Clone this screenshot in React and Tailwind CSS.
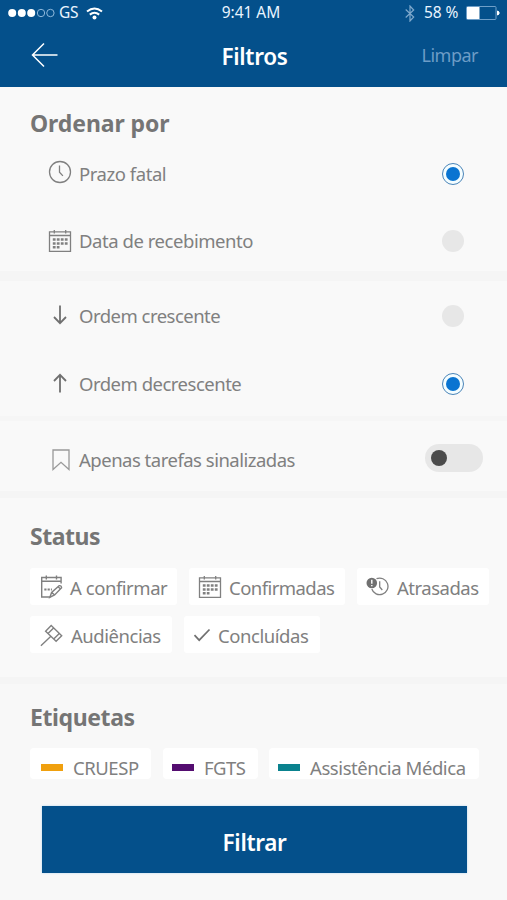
import React from "react";

function Clock() {
  return (
    <svg width="24" height="24" viewBox="0 0 24 24" fill="none" stroke="#808080" strokeWidth="1.3">
      <circle cx="12" cy="12" r="10.5" />
      <path d="M11.500 5.500v6.800l3.400 3.600" />
    </svg>
  );
}

function Calendar() {
  return (
    <svg width="24" height="24" viewBox="0 0 24 24" fill="none" stroke="#808080" strokeWidth="1.3">
      <path d="M1.500 2.800h21v19.600h-21zM1.500 6.500h21M6.300 1v3.600M17.700 1v3.600" />
      <path d="M4.800 10.500h14.800M4.800 14.400h14.800M4.800 18.300h6.700" strokeWidth="2.500" strokeDasharray="2.800 1.200" />
    </svg>
  );
}

function CalendarEdit() {
  return (
    <svg width="24" height="24" viewBox="0 0 24 24" fill="none" stroke="#808080" strokeWidth="1.4">
      <path d="M10.500 22H1.700V2.500h19.400v6M1.700 6.300h19.400M6.300 .6v3.800M16.500 .6v3.800" />
      <path d="M4.300 14.500h7.600" strokeWidth="2" strokeDasharray="2.200 1.100" />
      <path d="M9.800 22.400l1.800-5 7.600-6.700q2.200-.4 2.400 2l-7 7.300zM11.600 17.400l3 2.600M18 11.800l2.600 2.200" />
    </svg>
  );
}

function Late() {
  return (
    <svg width="24" height="20" viewBox="0 0 24 20" fill="none" stroke="#808080" strokeWidth="1.3">
      <path d="M10.500 1.700A8.300 8.300 0 1 1 5.800 12M13.700 4.200v5.800l2.600 3" />
      <circle cx="5.800" cy="6" r="5.300" fill="#707070" stroke="none" />
      <path d="M5.800 2.800v4M5.800 8v1.300" stroke="#fff" strokeWidth="1.400" />
    </svg>
  );
}

function Gavel() {
  return (
    <svg width="24" height="24" viewBox="0 0 24 24" fill="none" stroke="#808080" strokeWidth="1.4">
      <path d="M11.200 2.500L21.700 12.700L16.100 18.300L5.600 8.300zM13.600 4.900L8 10.600M19.300 10.400L13.700 16M10.900 13.300L.9 22.700" />
    </svg>
  );
}

function Check() {
  return (
    <svg width="18" height="14" viewBox="0 0 18 14" fill="none" stroke="#707070" strokeWidth="1.7">
      <path d="M1.500 7.200l4.700 5L16.500 1.500" />
    </svg>
  );
}

function ArrowV({ up }) {
  return (
    <svg className="-mt-[2px]" width="16" height="20" viewBox="0 0 16 20" fill="none" stroke="#707070" strokeWidth="1.8">
      <path d={up ? "M8 19.500V2M2 8l6-6.200L14 8" : "M8 .5V18M2 12l6 6.200 6-6.200"} />
    </svg>
  );
}

function Bookmark() {
  return (
    <svg width="18" height="22" viewBox="0 0 18 22" fill="none" stroke="#999" strokeWidth="1.300">
      <path d="M1 1h16v19.500l-8-7.200-8 7.200z" />
    </svg>
  );
}

function Radio({ on }) {
  return on ? (
    <span className="flex size-[22px] items-center justify-center rounded-full border border-[#4a84b8] bg-[#f4fdff]">
      <span className="size-[14px] rounded-full bg-[#0a74d1]" />
    </span>
  ) : (
    <span className="size-[22px] rounded-full bg-[#e7e7e7]" />
  );
}

function Row({ icon, label, track, on, h }) {
  return (
    <div className={`flex items-center pr-[43px] pl-12 ${h}`}>
      <span className="flex w-6 justify-center">{icon}</span>
      <span className={`ml-[7px] flex-1 text-[18.5px] ${track}`}>{label}</span>
      <Radio on={on} />
    </div>
  );
}

function Chip({ icon, label, size, iconBox, track }) {
  return (
    <div className={`flex h-[37px] items-center rounded-[3px] bg-white whitespace-nowrap ${size}`}>
      <span className={`flex shrink-0 ${iconBox}`}>{icon}</span>
      <span className={`mt-[2px] text-[18.5px] ${track}`}>{label}</span>
    </div>
  );
}

function Tag({ color, label, size, track }) {
  return (
    <div className={`flex h-[31px] items-center rounded-[4px] bg-white whitespace-nowrap ${size}`}>
      <span className={`mt-[8px] mr-[10px] h-[7px] w-[22px] shrink-0 ${color}`} />
      <span className={`mt-[9px] text-[18.5px] ${track}`}>{label}</span>
    </div>
  );
}

const heading = "pl-[30px] text-[23px] leading-8 font-bold text-[#757575]";

export default function App() {
  return (
    <div className="flex h-[900px] w-[507px] flex-col overflow-hidden bg-[#f9f9f9] font-['Noto_Sans','Open_Sans',sans-serif] text-[#808080]">
      <header className="h-[87px] shrink-0 bg-[#04508b] text-[#eaf5ff]">
        <div className="grid h-[26px] grid-cols-[1fr_66px_1fr] items-center text-[15.5px] whitespace-nowrap">
          <div className="flex items-center pl-2">
            <svg width="48" height="10" viewBox="0 0 48 10" fill="#fff">
              <circle cx="4.2" cy="5" r="4" />
              <circle cx="13.8" cy="5" r="4" />
              <circle cx="23.2" cy="5" r="4" />
              <g fill="none" stroke="#8fb9dc" strokeWidth="1">
                <circle cx="33" cy="5" r="3.7" />
                <circle cx="42.4" cy="5" r="3.7" />
              </g>
            </svg>
            <span className="ml-[3px] w-[27px] tracking-[-0.3px]">GS</span>
            <svg width="17" height="13" viewBox="0 0 17 13" fill="none" stroke="#fff" strokeWidth="2">
              <path d="M1 4.600Q8.500-1.600 16 4.600M3.800 7.600q4.700-3.800 9.400 0" />
              <circle cx="8.500" cy="10.600" r="2" fill="#fff" stroke="none" />
            </svg>
          </div>
          <div className="-ml-[5px] text-center tracking-[-0.05px]">9:41 AM</div>
          <div className="flex items-center justify-end pr-[7px]">
            <svg width="10" height="17" viewBox="0 0 10 17" fill="none" stroke="#7fa9cd" strokeWidth="1.200">
              <path d="M.7 4.500l8 7.500L5 16V1l3.700 4-8 7.500" />
            </svg>
            <span className="ml-[9px] w-[42px] tracking-[-0.1px]">58 %</span>
            <svg width="34" height="14" viewBox="0 0 34 14" fill="none">
              <rect x=".5" y=".5" width="29.500" height="13" rx="1" stroke="#6f9fc8" />
              <path d="M1 1h12.500v12H1z" fill="#fff" />
              <path d="M31.500 5v4l1.500-1V6z" fill="#fff" stroke="#fff" />
            </svg>
          </div>
        </div>
        <div className="grid h-[58px] grid-cols-[1fr_80px_1fr] items-center pr-[29px] pl-[31px]">
          <svg width="28" height="26" viewBox="0 0 28 26" fill="none" stroke="#fff" strokeWidth="1.500">
            <path d="M13 1.500L1.500 13 13 24.500M1.500 13H26.500" />
          </svg>
          <h1 className="mt-1 text-center text-[22.5px] font-semibold tracking-[-0.3px] text-white">Filtros</h1>
          <span className="text-right text-[18px] tracking-[-0.5px] text-[#6d9cc6]">Limpar</span>
        </div>
      </header>

      <section className="h-[194px] shrink-0 border-b-[10px] border-[#f5f5f5] pt-[20px]">
        <h2 className={`${heading} tracking-[-0.1px]`}>Ordenar por</h2>
        <Row h="h-[69px]" icon={<span className="-mt-[3px]"><Clock /></span>} label="Prazo fatal" track="tracking-[-0.45px]" on />
        <Row h="h-[65px]" icon={<Calendar />} label="Data de recebimento" track="tracking-[-0.45px]" />
      </section>

      <section className="h-[140px] shrink-0 border-b-[5px] border-[#f6f6f6] pt-[2px]">
        <Row h="h-[66px]" icon={<ArrowV />} label="Ordem crescente" track="tracking-[-0.52px]" />
        <Row h="h-[69px]" icon={<ArrowV up />} label="Ordem decrescente" track="tracking-[-0.5px]" on />
      </section>

      <section className="flex h-[77px] shrink-0 items-center border-b-[7px] border-[#f5f5f5] pr-6 pl-12">
        <span className="mt-[7px] flex w-6 justify-center pl-px"><Bookmark /></span>
        <span className="mt-[7px] ml-[7px] flex-1 text-[18.5px] tracking-[-0.5px]">Apenas tarefas sinalizadas</span>
        <span className="mt-1 flex h-7 w-[58px] items-center rounded-full bg-[#e7e7e7] pl-[6px]">
          <span className="size-4 rounded-full bg-[#4b4b4b]" />
        </span>
      </section>

      <section className="h-[186px] shrink-0 border-b-[7px] border-[#f5f5f5] pt-[22px]">
        <h2 className={`${heading} tracking-[-0.45px]`}>Status</h2>
        <div className="mt-[16px] flex gap-3 pl-[30px]">
          <Chip size="w-[147px]" iconBox="pl-[10px] w-[40px]" icon={<CalendarEdit />} label="A confirmar" track="tracking-[-0.45px]" />
          <Chip size="w-[156px]" iconBox="pl-[9px] w-[40px]" icon={<Calendar />} label="Confirmadas" track="tracking-[-0.55px]" />
          <Chip size="w-[132px]" iconBox="pl-[9px] w-[40px]" icon={<Late />} label="Atrasadas" track="tracking-[-0.5px]" />
        </div>
        <div className="mt-[11px] flex gap-3 pl-[30px]">
          <Chip size="w-[142px]" iconBox="pl-[10px] w-[41px]" icon={<Gavel />} label="Audiências" track="tracking-[-0.45px]" />
          <Chip size="w-[136px]" iconBox="pl-[9px] w-[34px]" icon={<Check />} label="Concluídas" track="tracking-[-0.45px]" />
        </div>
      </section>

      <section className="flex-1 bg-[#f8f8f8] pt-[17px]">
        <h2 className={`${heading} tracking-[-0.4px]`}>Etiquetas</h2>
        <div className="mt-[15px] flex pl-[30px]">
          <Tag size="mr-3 w-[121px] pl-[11px]" color="bg-[#f0a00e]" label="CRUESP" track="tracking-[-0.45px]" />
          <Tag size="mr-[11px] w-[95px] pl-[9px]" color="bg-[#540d70]" label="FGTS" track="tracking-[-0.5px]" />
          <Tag size="w-[210px] pl-[9px]" color="bg-[#0a828e]" label="Assistência Médica" track="tracking-[-0.42px]" />
        </div>
        <button className="mt-[27px] ml-[42px] flex h-[67px] w-[425px] items-center justify-center bg-[#04508b] pt-[6px] text-[22.5px] font-semibold tracking-[-0.35px] text-white shadow-[0_0_2px_#b5d5ee]">
          Filtrar
        </button>
      </section>
    </div>
  );
}
